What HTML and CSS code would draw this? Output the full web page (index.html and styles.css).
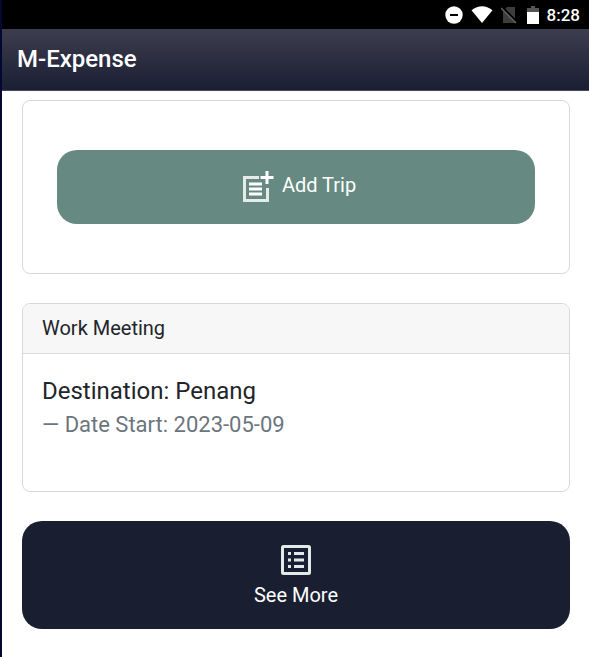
FILE: index.html
```html
<!DOCTYPE html>
<html lang="en">
<head>
<meta charset="utf-8">
<meta name="viewport" content="width=device-width, initial-scale=1">
<title>M-Expense</title>
<link rel="stylesheet" href="styles.css">
</head>
<body>
<div class="status-bar">
  <svg class="status-icon" width="18" height="18" viewBox="0 0 18 18" aria-hidden="true"><circle cx="9" cy="9" r="8.7" fill="#fff"/><path d="M5 9h8" stroke="#000" stroke-width="2"/></svg>
  <svg class="status-icon" width="22" height="18" viewBox="0 0 22 18" aria-hidden="true"><path d="M0.5 4.3Q11-4 21.500 4.300L11 17Z" fill="#fff"/></svg>
  <svg class="status-icon" width="16" height="18" viewBox="0 0 16 18" aria-hidden="true"><path d="M6 1h8v16H2V5Z" fill="#3d3d3d"/><path d="M1 1.500L16 16.500" stroke="#000" stroke-width="3"/><path d="M0 2L15 17" stroke="#666" stroke-width="1.400"/></svg>
  <svg class="status-icon battery" width="12" height="18" viewBox="0 0 12 18" aria-hidden="true"><path d="M4 0h4v2h4v5H0V2h4Z" fill="#555"/><path d="M0 6h12v12H0Z" fill="#fff"/></svg>
  <span class="clock">8:28</span>
</div>
<header class="app-header"><h1 class="app-title">M-Expense</h1></header>
<main class="content">
  <section class="card add-card">
    <button class="add-button" type="button">
      <svg width="32" height="32" viewBox="0 0 32 32" aria-hidden="true"><path d="M17 6.500H2.500v23h23V17" fill="none" stroke="#e4ebe9" stroke-width="3"/><path d="M7 13h13M7 18h13M7 23h13" stroke="#fff" stroke-width="3"/><path d="M25 0v13M18.500 6.500h13" stroke="#fff" stroke-width="3"/></svg>
      <span>Add Trip</span>
    </button>
  </section>
  <article class="card trip-card">
    <header class="card-header">Work Meeting</header>
    <div class="card-body">
      <h2 class="destination">Destination: Penang</h2>
      <p class="date">— Date Start: 2023-05-09</p>
    </div>
  </article>
  <button class="more-button" type="button">
    <svg width="30" height="30" viewBox="0 0 30 30" aria-hidden="true"><rect x="1.500" y="1.500" width="27" height="27" rx="1" fill="none" stroke="#e2eae9" stroke-width="3"/><path d="M7 8.500h3M7 15h3M7 21.500h3M13 8.500h10M13 15h10M13 21.500h10" stroke="#e2eae9" stroke-width="3"/></svg>
    <span>See More</span>
  </button>
</main>
</body>
</html>
```
FILE: styles.css
```css
* {
  box-sizing: border-box;
}

body {
  margin: 0;
  min-height: 100vh;
  border-left: 2px solid #04072f;
  background: #fff;
  color: #212529;
  font-family: Roboto, "Liberation Sans", sans-serif;
  font-size: 20px;
  line-height: 24px;
}

.status-bar {
  display: flex;
  align-items: center;
  justify-content: flex-end;
  gap: 8px;
  height: 29px;
  padding-right: 9px;
  background: #000;
  color: #fff;
}

.battery {
  margin-left: 2px;
}

.clock {
  font-size: 17px;
  font-weight: 500;
}

.app-header {
  padding: 18px 15px;
  border-bottom: 1px solid #4a4658;
  background: linear-gradient(#3d3d4e, #1a1f33);
  color: #fff;
}

.app-title {
  margin: 0;
  font-size: 24px;
  font-weight: 500;
  line-height: 25px;
}

.content {
  display: flex;
  flex-direction: column;
  gap: 29px;
  padding: 9px 19px 28px 20px;
}

.card {
  border: 1px solid #d8d8d8;
  border-radius: 8px;
  overflow: hidden;
}

.add-card {
  padding: 49px 34px;
}

button {
  display: flex;
  align-items: center;
  justify-content: center;
  width: 100%;
  border: 0;
  border-radius: 20px;
  color: #fff;
  font: inherit;
}

.add-button {
  gap: 8px;
  padding: 20px 16px 20px 22px;
  background: #668a82;
}

.add-button span {
  padding-bottom: 4px;
}

.add-button svg {
  margin: 1px 0;
}

.card-header {
  padding: 12px 19px 13px;
  border-bottom: 1px solid #d8d8d8;
  background: #f7f7f7;
}

.card-body {
  padding: 21px 19px 52px;
}

.destination {
  margin: 0 0 4px;
  font-size: 24px;
  font-weight: 400;
  line-height: 32px;
}

.date {
  margin: 0;
  color: #6c757d;
  font-size: 22px;
  line-height: 28px;
}

.more-button {
  flex-direction: column;
  gap: 8px;
  padding: 24px 20px 22px;
  background: #1a1e31;
}
```
